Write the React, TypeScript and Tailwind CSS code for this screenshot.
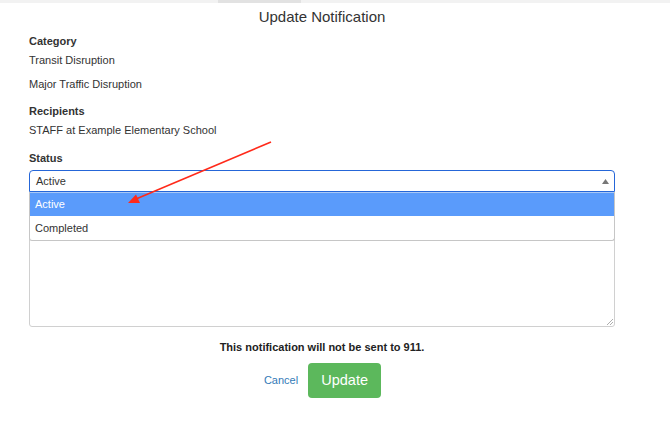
import React from "react";

export default function App() {
  return (
    <div
      className="relative w-[670px] h-[441px] bg-white overflow-hidden text-[#333]"
      style={{ fontFamily: '"Liberation Sans", Arial, sans-serif' }}
    >
      <div className="flex h-[3px] w-full bg-[#f2f2f2]">
        <div className="ml-[218px] w-[83px] h-full bg-[#e2e2e2]" />
      </div>
      <div className="ml-[29px] w-[586px] flex flex-col">
        <div className="mt-[4px] h-[20px] leading-[20px] text-[15px] text-center text-[#333]">
          Update Notification
        </div>
        <div className="mt-[6px] h-[16px] leading-[16px] text-[11px] font-bold">Category</div>
        <div className="mt-[3px] h-[16px] leading-[16px] text-[11px]">Transit Disruption</div>
        <div className="mt-[8px] h-[16px] leading-[16px] text-[11px]">Major Traffic Disruption</div>
        <div className="mt-[11px] h-[16px] leading-[16px] text-[11px] font-bold">Recipients</div>
        <div className="mt-[3px] h-[16px] leading-[16px] text-[11px]">STAFF at Example Elementary School</div>
        <div className="mt-[12px] h-[16px] leading-[16px] text-[11px] font-bold">Status</div>
        <div className="relative mt-[4px] z-10">
          <div className="h-[22px] border-[1.5px] border-[#2566d8] rounded-t-[4px] flex items-center justify-between pl-[6px] pr-[5px] text-[11px] bg-white">
            <span>Active</span>
            <svg width="7" height="5" viewBox="0 0 7 5">
              <polygon points="3.5,0 7,5 0,5" fill="#777" />
            </svg>
          </div>
          <div className="absolute left-0 right-0 top-full h-[49px] flex flex-col border border-t-0 border-[#c6c6c6] rounded-b-[3px] bg-white overflow-hidden">
            <div className="h-[24px] flex items-center pl-[5px] bg-[#5a9bfb] text-white text-[11px] border-t border-[#a9c8f6]">
              Active
            </div>
            <div className="h-[24px] flex items-center pl-[5px] text-[11px] text-[#333]">Completed</div>
          </div>
        </div>
        <div className="relative mt-[8px] h-[127px] border border-[#d0d0d0] rounded-[3px] bg-white">
          <svg className="absolute right-[1px] bottom-[1px]" width="7" height="7" viewBox="0 0 7 7">
            <line x1="1" y1="7" x2="7" y2="1" stroke="#999" strokeWidth="0.8" />
            <line x1="4" y1="7" x2="7" y2="4" stroke="#999" strokeWidth="0.8" />
          </svg>
        </div>
        <div className="mt-[12px] h-[16px] leading-[16px] text-[11px] font-bold text-center text-[#222]">
          This notification will not be sent to 911.
        </div>
        <div className="mt-[8px] flex justify-center items-center gap-[10px] pl-[1px]">
          <span className="text-[11px] text-[#337ab7]">Cancel</span>
          <button className="w-[73px] h-[35px] rounded-[4px] bg-[#5cb85c] text-white text-[14.5px]">
            Update
          </button>
        </div>
      </div>
      <svg className="absolute left-0 top-0 pointer-events-none z-20" width="670" height="441">
        <line x1="271" y1="142" x2="136" y2="199" stroke="#ff2a1a" strokeWidth="1.6" />
        <polygon points="128,203 136,194.5 140,203" fill="#ff2a1a" />
      </svg>
    </div>
  );
}
